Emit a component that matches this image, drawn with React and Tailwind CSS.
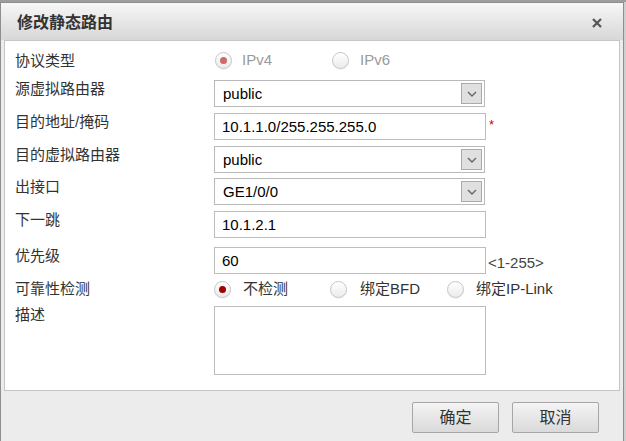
import React from 'react';

const FONT = { fontFamily: '"Liberation Sans", "Noto Sans CJK SC", sans-serif' };

const Radio = ({ checked, disabled }) => (
  <span className="w-[17px] h-[17px] shrink-0 rounded-full border border-[#c6c6c6] bg-linear-to-b from-white to-[#ebebeb] shadow-[0_1px_1px_rgba(0,0,0,0.06)] flex items-center justify-center">
    {checked && (
      <span className={`w-[7px] h-[7px] rounded-full ${disabled ? 'bg-[#cd6a6a]' : 'bg-[#a30000]'}`} />
    )}
  </span>
);

const Select = ({ value }) => (
  <div className="w-[271px] h-[27px] border border-[#b9b9b9] bg-white flex items-center justify-between pl-[8px] pr-[2px]">
    <span className="text-[15px] text-black leading-none">{value}</span>
    <span className="w-[21px] h-[21px] bg-[#e0e0e0] border border-[#ababab] flex items-center justify-center">
      <svg width="10" height="6" viewBox="0 0 10 6">
        <path d="M1 1 L5 5 L9 1" fill="none" stroke="#666" strokeWidth="1.4" />
      </svg>
    </span>
  </div>
);

const Input = ({ value }) => (
  <div className="w-[272px] h-[27px] border border-[#bdbdbd] bg-white flex items-center pl-[7px]">
    <span className="text-[15px] text-black leading-none">{value}</span>
  </div>
);

const Row = ({ label, className = '', children }) => (
  <div className={`flex ${className}`}>
    <div className="w-[199px] shrink-0 text-[15px] leading-[18px] text-[#333]">{label}</div>
    {children}
  </div>
);

const Button = ({ children }) => (
  <button className="w-[87px] h-[31px] rounded-[2px] border border-[#a6a6a6] bg-linear-to-b from-[#f4f4f4] to-[#dadada] text-[16px] text-[#333] flex items-center justify-center">
    {children}
  </button>
);

export default function App() {
  return (
    <div className="w-[626px] h-[441px] bg-[#cfcfcf] flex flex-col overflow-hidden" style={FONT}>
      <div className="h-[2px] bg-[#9e9e9e] shrink-0" />
      <div className="flex-1 mr-[2px] border-l border-r border-t border-[#8f8f8f] bg-[#ececec] flex flex-col min-h-0">
        {/* Title */}
        <div className="h-[37px] shrink-0 bg-linear-to-b from-[#f7f7f7] to-[#d7d7d7] flex items-center justify-between pl-[16px] pr-[21px] pt-[2px]">
          <span className="text-[16px] font-bold text-[#333]">修改静态路由</span>
          <svg width="10" height="10" viewBox="0 0 10 10">
            <path d="M1 1 L9 9 M9 1 L1 9" stroke="#555" strokeWidth="2.2" />
          </svg>
        </div>

        {/* Content */}
        <div className="mx-[3px] h-[351px] shrink-0 border border-[#c6c6c6] bg-white pl-[10px] flex flex-col">
          <Row label="协议类型" className="h-[39px] items-center">
            <div className="flex items-center text-[15px] text-[#9a9a9a]">
              <div className="w-[118px] flex items-center">
                <span className="ml-[1px]"><Radio checked disabled /></span>
                <span className="ml-[10px]">IPv4</span>
              </div>
              <div className="flex items-center">
                <Radio disabled />
                <span className="ml-[11px]">IPv6</span>
              </div>
            </div>
          </Row>

          <Row label="源虚拟路由器">
            <Select value="public" />
          </Row>

          <Row label="目的地址/掩码" className="mt-[6px]">
            <Input value="10.1.1.0/255.255.255.0" />
            <span className="ml-[3px] mt-[5px] text-[13px] leading-none text-[#e00000]">*</span>
          </Row>

          <Row label="目的虚拟路由器" className="mt-[6px]">
            <Select value="public" />
          </Row>

          <Row label="出接口" className="mt-[5px]">
            <Select value="GE1/0/0" />
          </Row>

          <Row label="下一跳" className="mt-[6px]">
            <Input value="10.1.2.1" />
          </Row>

          <Row label="优先级" className="mt-[9px]">
            <Input value="60" />
            <span className="ml-[2px] mt-[7px] text-[15px] leading-[18px] text-[#444]">&lt;1-255&gt;</span>
          </Row>

          <Row label="可靠性检测" className="mt-[3px] h-[24px] items-center">
            <div className="flex items-center text-[15px] text-[#333]">
              <div className="w-[116px] flex items-center">
                <Radio checked />
                <span className="ml-[12px]">不检测</span>
              </div>
              <div className="w-[117px] flex items-center">
                <Radio />
                <span className="ml-[13px]">绑定BFD</span>
              </div>
              <div className="flex items-center">
                <Radio />
                <span className="ml-[12px]">绑定IP-Link</span>
              </div>
            </div>
          </Row>

          <Row label="描述" className="mt-[5px]">
            <div className="w-[272px] h-[69px] border border-[#bdbdbd] bg-white" />
          </Row>
        </div>

        {/* Footer */}
        <div className="flex-1 flex justify-end items-start gap-[13px] pt-[11px] pr-[24px]">
          <Button>确定</Button>
          <Button>取消</Button>
        </div>
      </div>
    </div>
  );
}
